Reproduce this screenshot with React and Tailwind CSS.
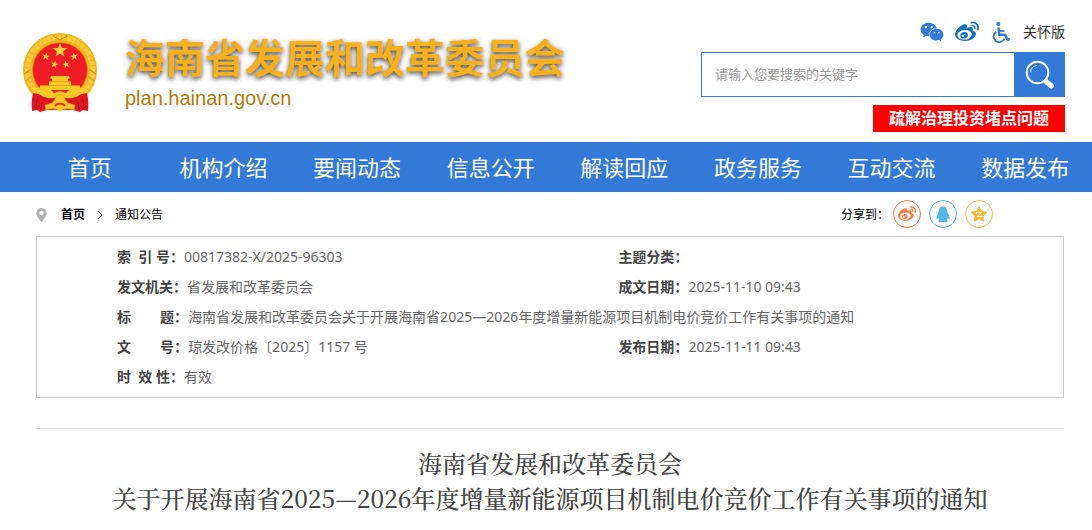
import React from "react";
import { FaWeixin, FaWeibo, FaMapMarkerAlt } from "react-icons/fa";

const navItems = ["首页", "机构介绍", "要闻动态", "信息公开", "解读回应", "政务服务", "互动交流", "数据发布"];

function star(cx, cy, r, rot = 0, inner = 0.4) {
  return Array.from({ length: 10 }, (_, i) => {
    const a = ((i * 36 - 90 + rot) * Math.PI) / 180;
    const d = i % 2 ? r * inner : r;
    return `${(cx + d * Math.cos(a)).toFixed(2)},${(cy + d * Math.sin(a)).toFixed(2)}`;
  }).join(" ");
}

function Emblem() {
  return (
    <svg viewBox="0 0 74 80" className="h-20 w-[74px] shrink-0" role="img" aria-label="国徽">
      <circle cx="37" cy="37" r="37" fill="#f0b61e" />
      <circle cx="37" cy="37" r="32.500" fill="none" stroke="#f8cb38" strokeWidth="5" strokeDasharray="4 1" />
      <circle cx="37" cy="37" r="27.500" fill="#ee1c25" stroke="#d9981a" strokeWidth="0.8" />
      <path d="M1 41l6-4M73 41l-6-4M3 48l6-5M71 48l-6-5M30 3l7 4 7-4" stroke="#c98a12" strokeWidth="1" fill="none" />
      <g fill="#fdd835">
        <polygon points={star(37, 17.5, 7.5)} />
        <polygon points={star(23, 23.5, 4, 10)} />
        <polygon points={star(51, 23.5, 4, -10)} />
        <polygon points={star(31.5, 31.5, 3.8, 15)} />
        <polygon points={star(43, 31.5, 3.8, -15)} />
      </g>
      <path d="M28 43h18l1 2.500h-2v3h3v4h9v4.500H17v-4.500h9v-4h3v-3h-2z" fill="#fbc926" />
      <path d="M27 48.500h20M18 52.500h38" stroke="#d9981a" strokeWidth="0.7" />
      <path d="M10 60 Q20 62 37 62 Q54 62 64 60 Q66 68 65 78 L60 77 L57 79 L50 77 H24 L17 79 L14 77 L9 78 Q8 68 10 60Z" fill="#dd1620" />
      <path d="M12 56 Q26 53 31 60 Q37 56.500 43 60 Q48 53 62 56 Q59 63 49 65 Q43 66 37 63 Q31 66 25 65 Q15 63 12 56Z" fill="#fbc926" />
      <path d="M14 67l-1 9M19 69l-1 8M60 67l1 9M55 69l1 8" stroke="#a90d14" strokeWidth="1" />
      <path d="M22 72 Q29 71 31 68 L33 63 L37 61 L41 63 L43 68 Q45 71 52 72 L51 77 Q43 74 37 78 Q31 74 23 77Z" fill="#fbc926" stroke="#d9981a" strokeWidth="0.6" />
      <path d="M32 73a5.500 4 0 0 1 10 0" fill="none" stroke="#ee1c25" strokeWidth="1.600" />
    </svg>
  );
}

function SearchIcon() {
  return (
    <svg viewBox="0 0 30 30" className="size-[30px]" fill="none" aria-hidden="true">
      <circle cx="12.500" cy="12.500" r="10.800" stroke="white" strokeWidth="2" />
      <path d="M5.500 12a7 7 0 0 1 6-6.500" stroke="white" strokeWidth="1" strokeLinecap="round" />
      <path d="M21 21.500l5.500 4.500" stroke="white" strokeWidth="5" strokeLinecap="round" />
    </svg>
  );
}

function WheelchairIcon() {
  return (
    <svg viewBox="0 0 20 24" className="h-6 w-5 text-[#337ad8]" fill="none" stroke="currentColor" aria-hidden="true">
      <circle cx="8.300" cy="4" r="2" fill="currentColor" stroke="none" />
      <path d="M8.600 7.500l.6 7.300h6l2.200 5 2.300-.8" strokeWidth="2.500" strokeLinejoin="round" />
      <path d="M9 11h5.500" strokeWidth="1.800" />
      <path d="M6 11.800a5.700 5.700 0 1 0 8.600 6.700" strokeWidth="1.900" />
    </svg>
  );
}

function QqIcon() {
  return (
    <svg viewBox="0 0 14 17" className="h-[17px] w-[14px]" fill="#56b6e7" aria-hidden="true">
      <path d="M7 .5C4.300.5 2.600 2.500 2.600 5.200c0 .8-.1 1.400-.5 2.100C1.100 8.900.3 10.700.4 12.200c.1 1.100.8.9 1.700-.5.3.9.7 1.600 1.300 2.200-.8.4-1.300.9-1.100 1.600.3.900 3.500 1.200 4.700.2 1.200 1 4.400.7 4.700-.2.200-.7-.3-1.200-1.100-1.600.6-.6 1-1.300 1.300-2.200.9 1.400 1.600 1.600 1.700.5.1-1.500-.7-3.300-1.700-4.900-.4-.7-.5-1.300-.5-2.100C11.400 2.500 9.700.5 7 .5z" />
    </svg>
  );
}

function QzoneIcon() {
  return (
    <svg viewBox="0 0 20 20" className="size-[18px]" aria-hidden="true">
      <polygon points={star(10, 10.7, 8.6, 0, 0.5)} fill="#fbb72f" stroke="#fbb72f" strokeWidth="1.500" strokeLinejoin="round" />
      <path d="M6.500 8.500h6.500l-5 4.200q3 .6 6 0" fill="none" stroke="white" strokeWidth="1" />
    </svg>
  );
}

function Cell({ label, children, span }) {
  return (
    <td colSpan={span} className="p-0 whitespace-nowrap">
      <strong className="font-bold text-[#444]">{label}</strong>
      <span>{children}</span>
    </td>
  );
}

export default function App() {
  return (
    <div className="min-h-screen overflow-x-hidden bg-white font-['Noto_Sans','Noto_Sans_CJK_SC',sans-serif] text-sm text-[#666]">
      <header className="flex items-start justify-between pr-[27px] pb-[10px] pl-[23px]">
        <a href="#home" className="flex items-start gap-7 pt-[33px]">
          <Emblem />
          <span className="flex flex-col">
            <span className="text-[40px] leading-[50px] font-bold whitespace-nowrap text-[#f8b01a] [text-shadow:0_2px_5px_rgba(0,0,0,0.75)]">
              海南省发展和改革委员会
            </span>
            <span className="font-['Liberation_Sans',sans-serif] text-xl leading-[30px] text-[#b07d0a]">plan.hainan.gov.cn</span>
          </span>
        </a>
        <div className="flex w-[364px] flex-col items-end pt-5">
          <div className="flex h-6 items-center gap-[11px]">
            <a href="#wechat" aria-label="微信"><FaWeixin className="size-6 text-[#337ad8]" /></a>
            <a href="#weibo" aria-label="微博"><FaWeibo className="size-6 text-[#0a72bd]" /></a>
            <a href="#care" className="flex items-center gap-[13px] text-[#333]">
              <WheelchairIcon />
              关怀版
            </a>
          </div>
          <form className="mt-2 flex h-[45px] w-full" role="search" onSubmit={(e) => e.preventDefault()}>
            <input
              type="text"
              aria-label="搜索"
              placeholder="请输入您要搜索的关键字"
              className="min-w-0 flex-1 border border-r-0 border-[#337ad8] px-[13px] text-[13px] text-[#333] outline-none placeholder:text-[#999]"
            />
            <button type="submit" aria-label="搜索" className="flex w-[51px] items-center justify-center bg-[#337ad8]">
              <SearchIcon />
            </button>
          </form>
          <a href="#issues" className="mt-2 bg-[red] px-4 text-base leading-[27px] font-bold text-white">
            疏解治理投资堵点问题
          </a>
        </div>
      </header>

      <nav className="flex h-[50px] items-center bg-[#337ad8] pl-[23px] text-[22px] text-white">
        {navItems.map((item) => (
          <a key={item} href="#nav" className="flex-1 text-center leading-[50px] whitespace-nowrap">
            {item}
          </a>
        ))}
      </nav>

      <main className="px-[28px] sm:pl-9">
        <div className="flex h-11 items-center justify-between pr-[71px] text-xs text-black">
          <div className="flex items-center pt-0.5">
            <FaMapMarkerAlt className="h-[14px] w-[11px] text-[#b3b3b3]" />
            <a href="#home" className="ml-[14px] font-bold">首页</a>
            <svg viewBox="0 0 6 10" className="mx-3 h-[10px] w-[6px]" fill="none" stroke="currentColor" aria-hidden="true">
              <path d="M1 1l4 4-4 4" />
            </svg>
            <a href="#notice">通知公告</a>
          </div>
          <div className="flex items-center gap-1">
            <span className="pt-0.5">分享到：</span>
            <div className="flex gap-2">
              <a href="#share-weibo" aria-label="微博" className="flex size-7 items-center justify-center rounded-full border border-[#ff763b]">
                <FaWeibo className="size-[18px] text-[#ff763b]" />
              </a>
              <a href="#share-qq" aria-label="QQ" className="flex size-7 items-center justify-center rounded-full border border-[#56b6e7]">
                <QqIcon />
              </a>
              <a href="#share-qzone" aria-label="QQ空间" className="flex size-7 items-center justify-center rounded-full border border-[#fdbe3d]">
                <QzoneIcon />
              </a>
            </div>
          </div>
        </div>

        <div className="border border-[#ccc] py-[5px] pl-20">
          <table className="w-full table-fixed border-collapse leading-[30px]">
            <colgroup>
              <col className="w-[53%]" />
              <col />
            </colgroup>
            <tbody>
              <tr>
                <Cell label={"索\u00a0\u00a0引\u00a0号："}>00817382-X/2025-96303</Cell>
                <Cell label="主题分类：" />
              </tr>
              <tr>
                <Cell label="发文机关：">省发展和改革委员会</Cell>
                <Cell label="成文日期：">2025-11-10 09:43</Cell>
              </tr>
              <tr>
                <Cell span={2} label={"标\u00a0\u00a0\u00a0\u00a0\u00a0\u00a0\u00a0\u00a0题："}>
                  海南省发展和改革委员会关于开展海南省2025—2026年度增量新能源项目机制电价竞价工作有关事项的通知
                </Cell>
              </tr>
              <tr>
                <Cell label={"文\u00a0\u00a0\u00a0\u00a0\u00a0\u00a0\u00a0\u00a0号："}>琼发改价格〔2025〕1157 号</Cell>
                <Cell label="发布日期：">2025-11-11 09:43</Cell>
              </tr>
              <tr>
                <Cell label={"时\u00a0\u00a0效\u00a0性："}>有效</Cell>
                <td />
              </tr>
            </tbody>
          </table>
        </div>

        <h1 className="mt-[30px] border-t border-[#e0e0e0] pt-4 text-center font-['Noto_Serif_CJK_SC','Liberation_Serif','Noto_Sans_CJK_SC',serif] text-2xl leading-[35px] font-medium text-[#444]">
          海南省发展和改革委员会
          <br />
          关于开展海南省2025—2026年度增量新能源项目机制电价竞价工作有关事项的通知
        </h1>
      </main>
    </div>
  );
}
